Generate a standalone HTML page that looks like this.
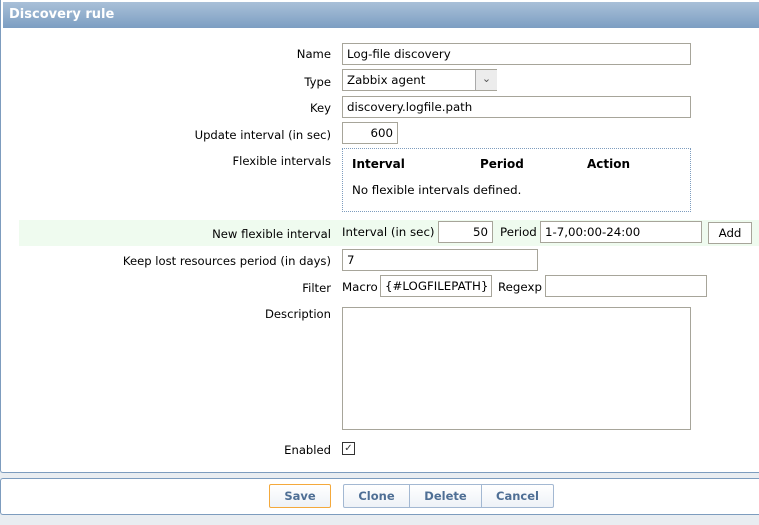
<!DOCTYPE html>
<html><head><style>
body{margin:0;width:759px;height:525px;background:#e9edf1;position:relative;overflow:hidden;font-family:"DejaVu Sans","Liberation Sans",sans-serif;font-size:11.5px;color:#000}
.a{position:absolute}
.panel{left:0;top:0;width:759px;height:473px;background:#fff;border:1px solid #7d9cbe;border-top:none;border-right:none;box-sizing:border-box;border-radius:0 0 0 3px}
.hdr{left:3px;top:2px;width:756px;height:26px;background:linear-gradient(#a9c0d8,#7c9ec2);color:#fff;font-weight:bold;font-size:13px;line-height:26px;padding-left:6px;box-sizing:border-box;font-family:"DejaVu Sans",sans-serif}
.lbl{right:428px;text-align:right;white-space:nowrap;font-size:11.6px}
.in{border:1px solid #a7a59a;background:#fff;box-sizing:border-box;height:22px;line-height:20px;padding:0 4px;white-space:nowrap;font-size:11.8px}
.t{font-size:11.8px;white-space:nowrap}
.btn{border:1px solid #a3b8d2;background:linear-gradient(#fff,#eef2f7);color:#4f6f95;font-weight:bold;text-align:center;line-height:22px;height:24px;box-sizing:border-box;font-size:11.5px}
</style></head><body>
<div class="a panel"></div>
<div class="a hdr">Discovery rule</div>

<div class="a lbl" style="top:47px">Name</div>
<div class="a in" style="left:342px;top:43px;width:349px">Log-file discovery</div>
<div class="a lbl" style="top:75px">Type</div>
<div class="a in" style="left:342px;top:69px;width:155px">Zabbix agent</div>
<div class="a" style="left:475px;top:70px;width:21px;height:20px;background:#ececec;border-left:1px solid #aaa;text-align:center;line-height:18px;color:#555;font-size:11px">&#8964;</div>
<div class="a lbl" style="top:101px">Key</div>
<div class="a in" style="left:342px;top:96px;width:349px">discovery.logfile.path</div>
<div class="a lbl" style="top:128px">Update interval (in sec)</div>
<div class="a in" style="left:342px;top:122px;width:56px;text-align:right">600</div>
<div class="a lbl" style="top:154px">Flexible intervals</div>
<div class="a" style="left:342px;top:148px;width:349px;height:64px;border:1px dotted #7d9cbe;box-sizing:border-box"></div>
<div class="a t" style="left:352px;top:157px;font-weight:bold;font-size:12px">Interval</div>
<div class="a t" style="left:480px;top:157px;font-weight:bold;font-size:12px">Period</div>
<div class="a t" style="left:587px;top:157px;font-weight:bold;font-size:12px">Action</div>
<div class="a t" style="left:352px;top:183px">No flexible intervals defined.</div>

<div class="a" style="left:19px;top:220px;width:740px;height:26px;background:#effbef"></div>
<div class="a lbl" style="top:227px">New flexible interval</div>
<div class="a t" style="left:342px;top:225px">Interval (in sec)</div>
<div class="a in" style="left:438px;top:221px;width:55px;text-align:right">50</div>
<div class="a t" style="left:500px;top:225px">Period</div>
<div class="a in" style="left:540px;top:221px;width:162px">1-7,00:00-24:00</div>
<div class="a in" style="left:708px;top:222px;width:44px;text-align:center;background:#fff">Add</div>

<div class="a lbl" style="top:254px">Keep lost resources period (in days)</div>
<div class="a in" style="left:342px;top:249px;width:196px">7</div>
<div class="a lbl" style="top:281px">Filter</div>
<div class="a t" style="left:342px;top:280px">Macro</div>
<div class="a in" style="left:380px;top:275px;width:112px">{#LOGFILEPATH}</div>
<div class="a t" style="left:498px;top:280px">Regexp</div>
<div class="a in" style="left:545px;top:275px;width:162px"></div>
<div class="a lbl" style="top:307px">Description</div>
<div class="a in" style="left:342px;top:307px;width:349px;height:123px"></div>
<div class="a lbl" style="top:443px">Enabled</div>
<div class="a" style="left:342px;top:442px;width:13px;height:13px;border:1px solid #333;box-sizing:border-box;font-size:10px;line-height:11px;text-align:center;color:#333">&#10003;</div>

<div class="a" style="left:0;top:478px;width:759px;height:37px;background:#fff;border:1px solid #7d9cbe;border-right:none;box-sizing:border-box;border-radius:3px 0 0 3px"></div>
<div class="a btn" style="left:269px;top:484px;width:62px;border-color:#f4a93c;border-radius:2px">Save</div>
<div class="a btn" style="left:343px;top:484px;width:67px;border-radius:2px 0 0 2px">Clone</div>
<div class="a btn" style="left:409px;top:484px;width:73px">Delete</div>
<div class="a btn" style="left:481px;top:484px;width:73px;border-radius:0 2px 2px 0">Cancel</div>
</body></html>
